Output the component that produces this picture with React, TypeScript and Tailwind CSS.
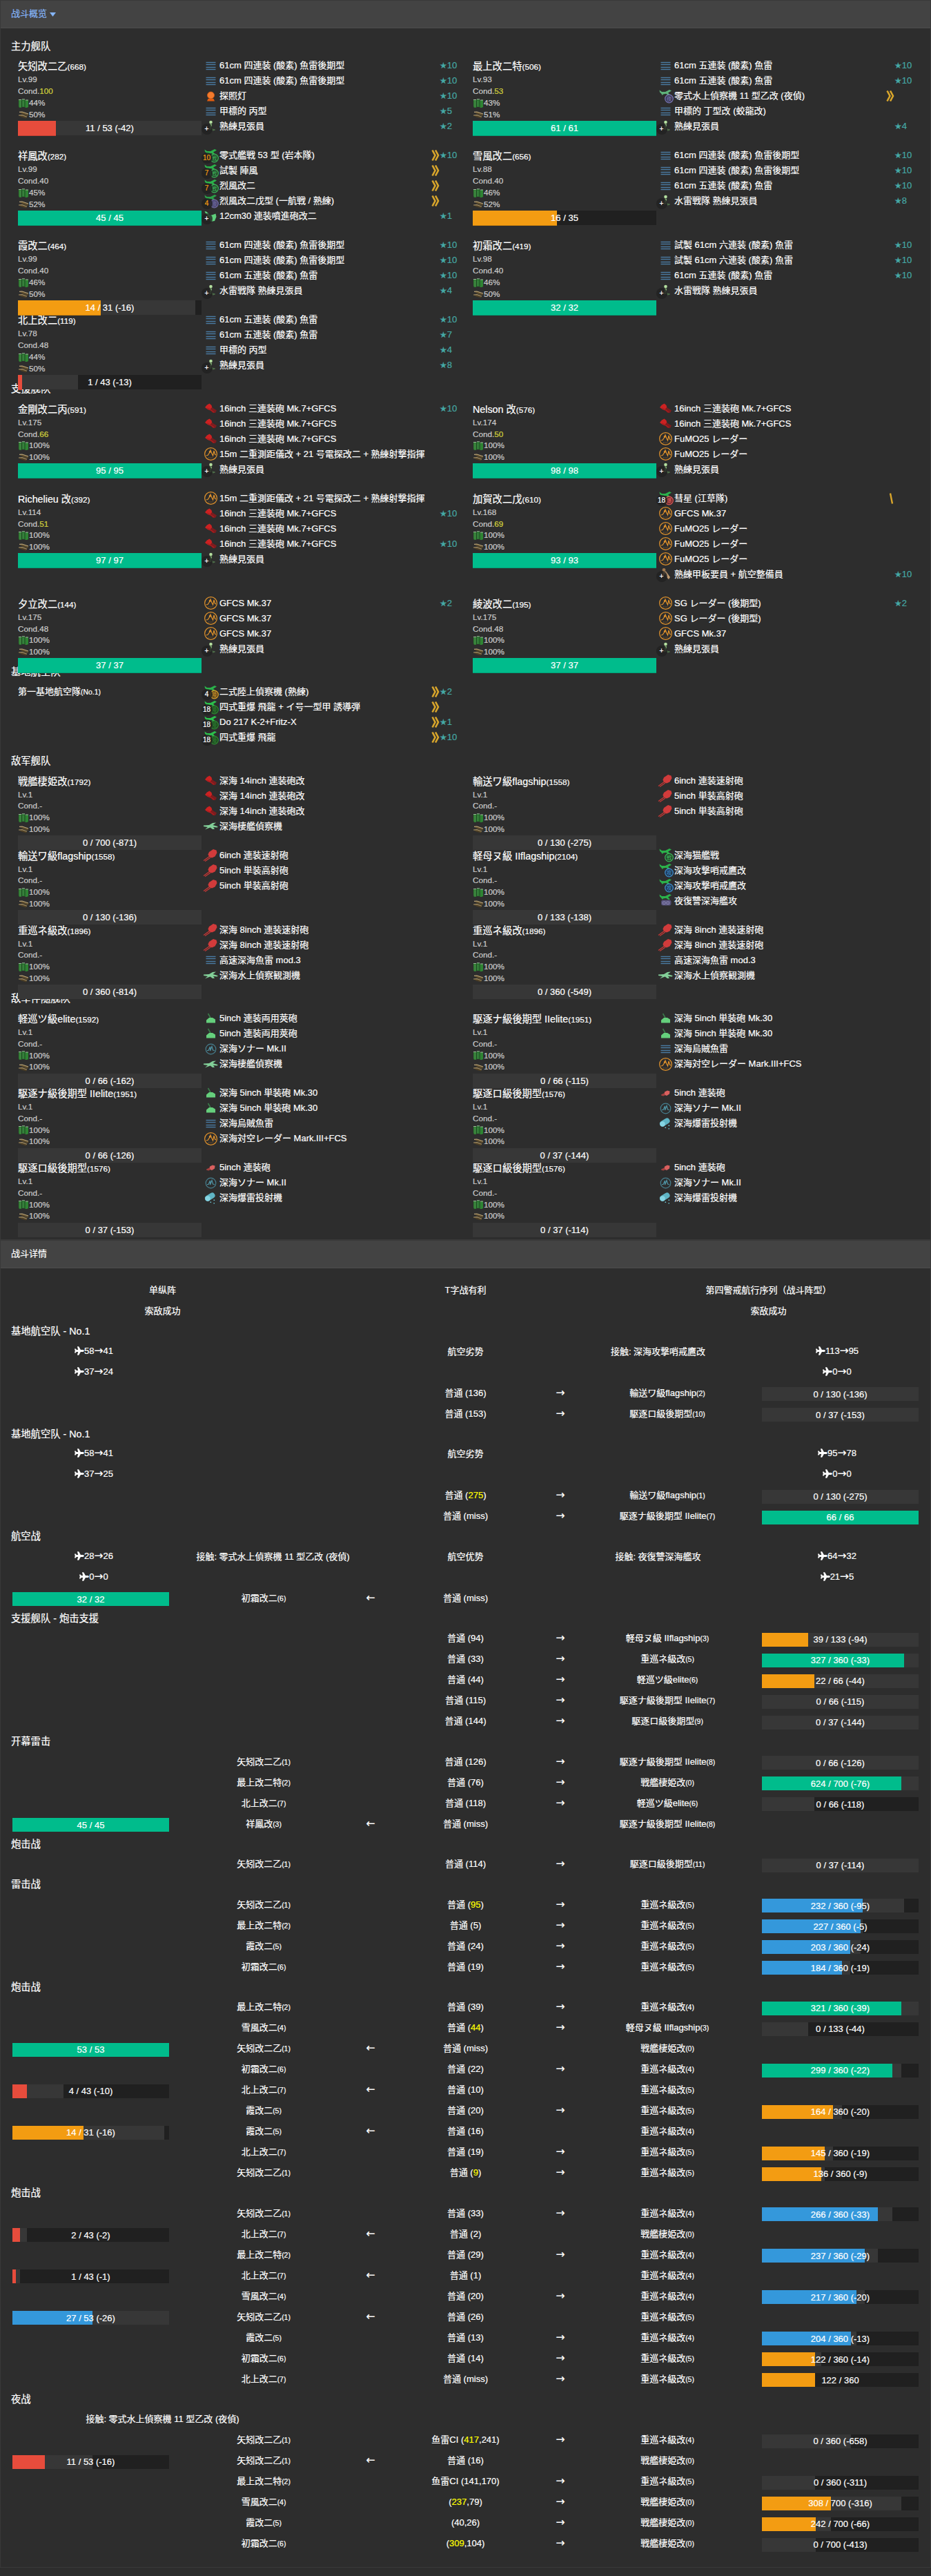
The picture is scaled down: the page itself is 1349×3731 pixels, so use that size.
import { ReactNode } from "react";
import { FaPlane } from "react-icons/fa";

type Equip = [icon: string, name: string, star?: number, prof?: number, badge?: string, badgeHot?: boolean];

interface Ship {
  name: string;
  id: number;
  lv: number;
  cond: string;
  fuel: number;
  ammo: number;
  cur: number;
  max: number;
  lost?: number;
  hurt?: number;
  equips: Equip[];
}

const PLANE = "M1.5 1.5 L5 4 L10 4 L16 1 L19 2.5 L14 5.5 L17 8.5 L14.5 9 L11 6.8 L7 7.5 L5.5 9 L4.5 7 L2 4.5 Z";
const WAVE = "M3.5 13 L6 12.5 L9 8 L10 5 L12 10 L13.5 13 L15 6 L16.5 11 L18 12";

function Plane({ color }: { color: string }) {
  return <path d={PLANE} fill={color} />;
}

function Mark({ stroke, label, fill = "#23412a" }: { stroke: string; label: string; fill?: string }) {
  return (
    <>
      <circle cx="15.5" cy="14" r="5.8" fill={fill} stroke={stroke} strokeWidth="1.2" />
      <text x="15.5" y="16.8" textAnchor="middle" fontSize="7.5" fill={stroke} fontFamily="Noto Sans CJK JP, sans-serif">
        {label}
      </text>
    </>
  );
}

function icon(kind: string): ReactNode {
  switch (kind) {
    case "torp":
      return [5.5, 8.5, 12.5, 15.5].map((y) => (
        <path key={y} d={`M3.5 ${y}H17.5`} stroke="#4a7ba3" strokeWidth="1.4" />
      ));
    case "light":
      return (
        <>
          <path d="M5 17.5 L6.5 14 H14.5 L16 17.5 Z" fill="#e05c10" />
          <circle cx="10.5" cy="9" r="5" fill="#f27b2e" stroke="#d9590f" strokeWidth="0.8" />
        </>
      );
    case "crew":
      return (
        <>
          <circle cx="10.5" cy="4" r="2.3" fill="#b5e0a0" />
          <path d="M9.5 6.5 L12 7 L12 11 L10 15 L8.5 15 Z" fill="#86b877" />
          <path d="M11 11 L15 15 L14 17 L9 12 Z" fill="#4c6b48" />
          <path d="M13.5 14h3v2h-3z" fill="#4c6b48" />
        </>
      );
    case "mech":
      return (
        <>
          <circle cx="8" cy="4.5" r="2.4" fill="#a07850" />
          <path d="M6.5 7 L11 6.5 L17 15 L15 18 L12 15 L10 10 L7 13 Z" fill="#c09a70" />
        </>
      );
    case "aagun":
      return <path d="M1.5 3 L4 3.5 L9 8 L12 8.5 L17.5 6.5 L18.5 11 L16 17 L10 18 L9 13 L3 6 Z" fill="#5fd07c" />;
    case "big":
      return (
        <>
          <path d="M2 9 L5 5.5 L8.5 3.5 L11.5 6 L12.5 10 L10 13.5 L6 12 Z" fill="#cc2222" />
          <path d="M9 12.5 L12 9 L19 13.5 L17 17 L13.5 17 Z" fill="#7d1c1e" />
          <path d="M5 10 L10 12.5 L15 16" stroke="#b01e20" strokeWidth="1.4" />
        </>
      );
    case "med":
      return (
        <>
          <path d="M9 12 L0 18.5 M10 14 L2 19.5" stroke="#c93836" strokeWidth="1.2" />
          <path d="M8 6 L14 2 L18.5 3.5 L19.5 7 L16.5 12.5 L12 14.5 L8 13 L6.5 9.5 Z" fill="#d13b3b" />
        </>
      );
    case "small":
      return (
        <>
          <path d="M9 8.5 L13 6.5 L16.5 7.5 L16 11.5 L12 14 L8.5 12.5 Z" fill="#d9605f" />
          <path d="M4 12.5 L9 10 L9.5 13.5 L7 14.5 L4 13.5 Z" fill="#a3403f" />
        </>
      );
    case "dual":
      return (
        <>
          <path d="M6.5 3 L10 9" stroke="#3b7b4b" strokeWidth="1.6" />
          <path d="M4 16.5 V12.5 L8 9 H13 L17 11.5 V16.5 Z" fill="#65cf7c" />
        </>
      );
    case "radar":
      return (
        <>
          <circle cx="10.5" cy="10.5" r="8.9" fill="none" stroke="#e0922c" strokeWidth="1.2" />
          <path d={WAVE} fill="none" stroke="#e0922c" strokeWidth="1.2" />
          <circle cx="9.2" cy="7.5" r="1.4" fill="#e0922c" />
          <path d="M7 16h7" stroke="#a06a28" strokeDasharray="1 1.2" />
        </>
      );
    case "sonar":
      return (
        <>
          <circle cx="10.5" cy="10.5" r="7.3" fill="none" stroke="#467f8f" strokeWidth="1.2" />
          <path d="M5 12.5 H7 L9.5 7 V13 L12 6.5 L13.5 12 L16 12.5" fill="none" stroke="#4f93a4" strokeWidth="1.2" />
        </>
      );
    case "depth":
      return (
        <>
          <path d="M6 10.5 L12.5 6.5" stroke="#5fb4c4" strokeWidth="8" strokeLinecap="round" />
          <circle cx="6" cy="11" r="3.8" fill="#86d5e3" />
          <path d="M9.5 15.5h1.6v1.6h-1.6zM14.5 12.5h1.6v1.6h-1.6zM14.5 17h1.4v1.4h-1.4z" fill="#6ec3d2" />
        </>
      );
    case "scout":
      return (
        <path
          d="M0 9.5 L8 9 L13 6 L18 5.5 L13.5 9 L20.5 11 L20 12.5 L14 12 L16 15 L13 15 L9.5 12.5 L2 15.5 L6 12 L0 11 Z"
          fill="#82cf98"
        />
      );
    case "fighter":
      return (
        <>
          <Plane color="#2bb24b" />
          <Mark stroke="#3cb75a" label="戦" />
        </>
      );
    case "attack":
      return (
        <>
          <Plane color="#2bb24b" />
          <Mark stroke="#3f8fd0" label="攻" fill="#1f3a55" />
        </>
      );
    case "bomber":
      return (
        <>
          <Plane color="#2bb24b" />
          <Mark stroke="#e05a5a" label="爆" fill="#5a2a2c" />
        </>
      );
    case "nightf":
      return (
        <>
          <Plane color="#2ba048" />
          <Mark stroke="#6f6a9e" label="夜" fill="#4b4772" />
        </>
      );
    case "nighta":
      return (
        <>
          <Plane color="#2bb24b" />
          <rect x="4" y="9.5" width="14.5" height="8" rx="3" fill="#56527a" />
          <path d="M6.5 12h3.5v3.5H6.5zM12 12h3.5v3.5H12z" fill="none" stroke="#8a86b4" />
        </>
      );
    case "nights":
      return (
        <>
          <Plane color="#5eb27a" />
          <Mark stroke="#7a76b5" label="夜" fill="#3a3a52" />
        </>
      );
    case "landscout":
      return (
        <>
          <Plane color="#2bb24b" />
          <Mark stroke="#e0a52c" label="陸" fill="#54421c" />
        </>
      );
    default:
      return (
        <>
          <Plane color="#2cc04c" />
          <Mark stroke="#2f8b33" label="陸" fill="#1f4a22" />
        </>
      );
  }
}

function EquipRow({ item }: { item: Equip }) {
  const [kind, name, star, prof, badge, hot] = item;
  return (
    <div className="flex h-[22px] items-center text-[13px] leading-[22px]">
      <div className="relative h-[21px] w-[21px] shrink-0">
        <svg viewBox="0 0 21 21" className="block h-[21px] w-[21px] overflow-visible">
          {icon(kind)}
        </svg>
        {badge && (
          <span
            className={
              "absolute top-[6px] left-[-3px] flex h-4 w-4 items-center justify-center rounded-full bg-[#202020]/80 text-[10px] leading-none " +
              (hot ? "text-[#f39c12]" : "text-white")
            }
          >
            {badge}
          </span>
        )}
      </div>
      <span className="ml-[2.5px] w-[306px] whitespace-nowrap">{name}</span>
      <span className="flex w-[13px] justify-end">
        {prof === 1 && (
          <svg viewBox="0 0 12 18" className="h-[18px] w-3">
            <path d="M6 1.5 L9 16.5" stroke="#d9a62b" strokeWidth="2.4" />
          </svg>
        )}
        {prof === 7 && (
          <svg viewBox="0 0 12 18" className="h-[18px] w-3">
            <path d="M1.5 1.5 L5.5 9 L1.5 16.5 M6 1.5 L10 9 L6 16.5" fill="none" stroke="#d9a62b" strokeWidth="2.6" />
          </svg>
        )}
      </span>
      {star ? (
        <span className="flex text-[#45a9a5]">
          <span className="font-['DejaVu_Sans'] text-[12px]">★</span>
          {star}
        </span>
      ) : null}
    </div>
  );
}

function tone(r: number) {
  if (r > 0.75) return "bg-[#00bc8c]";
  if (r > 0.5) return "bg-[#3498db]";
  if (r > 0.25) return "bg-[#f39c12]";
  return "bg-[#e74c3c]";
}

/** `lost` is the printed damage, `before` the HP the ship had before the hit. */
function Bar({ cur, max, lost, before, tall }: { cur: number; max: number; lost?: number; before?: number; tall?: boolean }) {
  const start = before ?? Math.min(max, cur + (lost ?? 0));
  return (
    <div className={"relative z-10 w-full shrink-0 bg-[#202020] " + (tall ? "h-[21px]" : "h-[20px]")}>
      <div className="absolute inset-y-0 left-0 bg-[#373737]" style={{ width: `${(start / max) * 100}%` }} />
      <div
        className={"absolute top-0 left-0 " + (tall ? "h-[22px] shadow-[inset_0_-1px_0_rgba(0,0,0,.15)] " : "h-[20px] ") + tone(cur / max)}
        style={{ width: `${(cur / max) * 100}%` }}
      />
      <div className="absolute inset-0 flex items-center justify-center text-[13px] leading-none whitespace-nowrap text-white">
        {`${cur} / ${max}${lost ? ` (-${lost})` : ""}`}
      </div>
    </div>
  );
}

function Fuel() {
  return (
    <svg viewBox="0 0 15 13" className="ml-px h-[13px] w-[15px]">
      <path d="M0 2 H4 V13 H1 L0 11 Z" fill="#2c7a2f" />
      <path d="M4.5 1 H9 V12 H4.5 Z" fill="#23702a" />
      <path d="M9.5 2 H14 V12 L12 13 H9.5 Z" fill="#2e8433" />
      <path d="M0 1.5H4M5 .8H9M10 2H14" stroke="#9bb89b" />
      <path d="M2.2 3V12M6.5 3V11.5" stroke="#5a955c" strokeWidth="0.8" />
    </svg>
  );
}

function Ammo() {
  return (
    <svg viewBox="0 0 15 12" className="ml-px h-3 w-[15px]">
      <path d="M1 2.5 L6 2 L14 5.5 L13 8 L6 5.5 Z" fill="#5a4a2c" />
      <path d="M1 2.3 L5 2 L14 5" stroke="#bda77a" strokeWidth="1.2" fill="none" />
      <path d="M0 7 L5 6.5 L12 9 L11 11.5 L4 9.5 Z" fill="#4d3f26" />
      <path d="M0 7 L5 6.6 L12 9.2" stroke="#a28d62" strokeWidth="1.2" fill="none" />
    </svg>
  );
}

function ShipCard({ ship }: { ship: Ship }) {
  return (
    <div className="flex w-[659px] pb-5 pl-[10px]">
      <div className="flex h-0 w-[266px] flex-col">
        <div className="h-[23px] shrink-0 text-[14.3px] leading-[25px] whitespace-nowrap">
          {ship.name}
          <span className="text-[11.7px]">({ship.id})</span>
        </div>
        <div className="h-[67.5px] shrink-0 text-[11.7px] leading-[16.7px] text-[#cdcdcd]">
          <div>Lv.{ship.lv}</div>
          <div>
            Cond.<span className={Number(ship.cond) >= 50 ? "text-[#d3d33c]" : ""}>{ship.cond}</span>
          </div>
          <div className="flex items-center">
            <Fuel />
            {ship.fuel}%
          </div>
          <div className="flex items-center">
            <Ammo />
            {ship.ammo}%
          </div>
        </div>
        <Bar cur={ship.cur} max={ship.max} lost={ship.lost} before={ship.hurt} tall />
      </div>
      <div className="ml-[2.5px] min-h-[88px]">
        {ship.equips.map((e, i) => (
          <EquipRow key={i} item={e} />
        ))}
      </div>
    </div>
  );
}

function Fleet({ title, ships }: { title: string; ships: Ship[] }) {
  return (
    <section>
      <div className="flex h-[20.43px] text-[14.3px]">
        <span className="-mt-[7.5px] leading-[20px]">{title}</span>
      </div>
      <div className="grid grid-cols-[659px_659px]">
        {ships.map((s, i) => (
          <ShipCard key={i} ship={s} />
        ))}
      </div>
    </section>
  );
}

const T4 = "61cm 四連装 (酸素) 魚雷後期型";
const T5 = "61cm 五連装 (酸素) 魚雷";
const T6 = "試製 61cm 六連装 (酸素) 魚雷";
const G16 = "16inch 三連装砲 Mk.7+GFCS";
const R15 = "15m 二重測距儀改 + 21 号電探改二 + 熟練射撃指揮";
const LOOK = "熟練見張員";
const TLOOK = "水雷戦隊 熟練見張員";

const MAIN: Ship[] = [
  { name: "矢矧改二乙", id: 668, lv: 99, cond: "100", fuel: 44, ammo: 50, cur: 11, max: 53, lost: 42,
    equips: [["torp", T4, 10], ["torp", T4, 10], ["light", "探照灯", 10], ["torp", "甲標的 丙型", 5], ["crew", LOOK, 2, 0, "+"]] },
  { name: "最上改二特", id: 506, lv: 93, cond: "53", fuel: 43, ammo: 51, cur: 61, max: 61,
    equips: [["torp", T5, 10], ["torp", T5, 10], ["nights", "零式水上偵察機 11 型乙改 (夜偵)", 0, 7], ["torp", "甲標的 丁型改 (蛟龍改)"], ["crew", LOOK, 4, 0, "+"]] },
  { name: "祥鳳改", id: 282, lv: 99, cond: "40", fuel: 45, ammo: 52, cur: 45, max: 45,
    equips: [["fighter", "零式艦戦 53 型 (岩本隊)", 10, 7, "10", true], ["fighter", "試製 陣風", 0, 7, "7", true], ["fighter", "烈風改二", 0, 7, "7", true], ["nightf", "烈風改二戊型 (一航戦 / 熟練)", 0, 7, "4", true], ["aagun", "12cm30 連装噴進砲改二", 1, 0, "+"]] },
  { name: "雪風改二", id: 656, lv: 88, cond: "40", fuel: 46, ammo: 52, cur: 16, max: 35,
    equips: [["torp", T4, 10], ["torp", T4, 10], ["torp", T5, 10], ["crew", TLOOK, 8, 0, "+"]] },
  { name: "霞改二", id: 464, lv: 99, cond: "40", fuel: 46, ammo: 50, cur: 14, max: 31, lost: 16,
    equips: [["torp", T4, 10], ["torp", T4, 10], ["torp", T5, 10], ["crew", TLOOK, 4, 0, "+"]] },
  { name: "初霜改二", id: 419, lv: 98, cond: "40", fuel: 46, ammo: 50, cur: 32, max: 32,
    equips: [["torp", T6, 10], ["torp", T6, 10], ["torp", T5, 10], ["crew", TLOOK, 0, 0, "+"]] },
  { name: "北上改二", id: 119, lv: 78, cond: "48", fuel: 44, ammo: 50, cur: 1, max: 43, lost: 13,
    equips: [["torp", T5, 10], ["torp", T5, 7], ["torp", "甲標的 丙型", 4], ["crew", LOOK, 8, 0, "+"]] },
];

const SUPPORT: Ship[] = [
  { name: "金剛改二丙", id: 591, lv: 175, cond: "66", fuel: 100, ammo: 100, cur: 95, max: 95,
    equips: [["big", G16, 10], ["big", G16], ["big", G16], ["radar", R15], ["crew", LOOK, 0, 0, "+"]] },
  { name: "Nelson 改", id: 576, lv: 174, cond: "50", fuel: 100, ammo: 100, cur: 98, max: 98,
    equips: [["big", G16], ["big", G16], ["radar", "FuMO25 レーダー"], ["radar", "FuMO25 レーダー"], ["crew", LOOK, 0, 0, "+"]] },
  { name: "Richelieu 改", id: 392, lv: 114, cond: "51", fuel: 100, ammo: 100, cur: 97, max: 97,
    equips: [["radar", R15], ["big", G16, 10], ["big", G16], ["big", G16, 10], ["crew", LOOK, 0, 0, "+"]] },
  { name: "加賀改二戊", id: 610, lv: 168, cond: "69", fuel: 100, ammo: 100, cur: 93, max: 93,
    equips: [["bomber", "彗星 (江草隊)", 0, 1, "18"], ["radar", "GFCS Mk.37"], ["radar", "FuMO25 レーダー"], ["radar", "FuMO25 レーダー"], ["radar", "FuMO25 レーダー"], ["mech", "熟練甲板要員 + 航空整備員", 10, 0, "+"]] },
  { name: "夕立改二", id: 144, lv: 175, cond: "48", fuel: 100, ammo: 100, cur: 37, max: 37,
    equips: [["radar", "GFCS Mk.37", 2], ["radar", "GFCS Mk.37"], ["radar", "GFCS Mk.37"], ["crew", LOOK, 0, 0, "+"]] },
  { name: "綾波改二", id: 195, lv: 175, cond: "48", fuel: 100, ammo: 100, cur: 37, max: 37,
    equips: [["radar", "SG レーダー (後期型)", 2], ["radar", "SG レーダー (後期型)"], ["radar", "GFCS Mk.37"], ["crew", LOOK, 0, 0, "+"]] },
];

const LBAS: Equip[] = [
  ["landscout", "二式陸上偵察機 (熟練)", 2, 7, "4"],
  ["land", "四式重爆 飛龍 + イ号一型甲 誘導弾", 0, 7, "18"],
  ["land", "Do 217 K-2+Fritz-X", 1, 7, "18"],
  ["land", "四式重爆 飛龍", 10, 7, "18"],
];

function foe(name: string, id: number, max: number, lost: number, equips: Equip[]): Ship {
  return { name, id, lv: 1, cond: "-", fuel: 100, ammo: 100, cur: 0, max, lost, hurt: max, equips };
}

const WA: Equip[] = [["med", "6inch 連装速射砲"], ["med", "5inch 単装高射砲"], ["med", "5inch 単装高射砲"]];
const NE: Equip[] = [["med", "深海 8inch 連装速射砲"], ["med", "深海 8inch 連装速射砲"], ["torp", "高速深海魚雷 mod.3"], ["scout", "深海水上偵察観測機"]];
const NA: Equip[] = [["dual", "深海 5inch 単装砲 Mk.30"], ["dual", "深海 5inch 単装砲 Mk.30"], ["torp", "深海烏賊魚雷"], ["radar", "深海対空レーダー Mark.III+FCS"]];
const RO: Equip[] = [["small", "5inch 連装砲"], ["sonar", "深海ソナー Mk.II"], ["depth", "深海爆雷投射機"]];

const ENEMY: Ship[] = [
  foe("戦艦棲姫改", 1792, 700, 871, [["big", "深海 14inch 連装砲改"], ["big", "深海 14inch 連装砲改"], ["big", "深海 14inch 連装砲改"], ["scout", "深海棲艦偵察機"]]),
  foe("輸送ワ級flagship", 1558, 130, 275, WA),
  foe("輸送ワ級flagship", 1558, 130, 136, WA),
  foe("軽母ヌ級 IIflagship", 2104, 133, 138, [["fighter", "深海猫艦戦"], ["attack", "深海攻撃哨戒鷹改"], ["attack", "深海攻撃哨戒鷹改"], ["nighta", "夜復讐深海艦攻"]]),
  foe("重巡ネ級改", 1896, 360, 814, NE),
  foe("重巡ネ級改", 1896, 360, 549, NE),
];

const ESCORT: Ship[] = [
  foe("軽巡ツ級elite", 1592, 66, 162, [["dual", "5inch 連装両用莢砲"], ["dual", "5inch 連装両用莢砲"], ["sonar", "深海ソナー Mk.II"], ["scout", "深海棲艦偵察機"]]),
  foe("駆逐ナ級後期型 IIelite", 1951, 66, 115, NA),
  foe("駆逐ナ級後期型 IIelite", 1951, 66, 126, NA),
  foe("駆逐ロ級後期型", 1576, 37, 144, RO),
  foe("駆逐ロ級後期型", 1576, 37, 153, RO),
  foe("駆逐ロ級後期型", 1576, 37, 114, RO),
];

type Side = [name: string, pos: number];
type Hp = [cur: number, max: number, lost?: number, before?: number];

function PhaseTitle({ children }: { children: ReactNode }) {
  return <div className="flex h-[28.5px] items-center pt-px text-[14.3px] leading-[27px]">{children}</div>;
}

function Three({ left, mid, right }: { left?: string; mid?: string; right?: string }) {
  return (
    <div className="grid h-[30px] grid-cols-3 items-center text-center">
      <div>{left}</div>
      <div>{mid}</div>
      <div>{right}</div>
    </div>
  );
}

function Arrow({ children }: { children: string }) {
  return <span className="font-['DejaVu_Sans'] text-[15.5px] leading-none">{children}</span>;
}

function Planes({ v }: { v: [number, number] }) {
  return (
    <span className="inline-flex items-center">
      <FaPlane className="h-[13px] w-[14px]" />
      {v[0]}
      <Arrow>→</Arrow>
      {v[1]}
    </span>
  );
}

function Air({ l, lc, mid, rc, r }: { l: [number, number]; lc?: string; mid?: string; rc?: string; r: [number, number] }) {
  return (
    <div className="grid h-[30px] grid-cols-[240px_279px_279px_279px_240px] items-center text-center">
      <div><Planes v={l} /></div>
      <div>{lc}</div>
      <div>{mid}</div>
      <div>{rc}</div>
      <div><Planes v={r} /></div>
    </div>
  );
}

function SideName({ side }: { side?: Side }) {
  return (
    <div>
      {side && (
        <>
          {side[0]}
          <span className="text-[10.4px]">({side[1]})</span>
        </>
      )}
    </div>
  );
}

/** Numbers written with a trailing "!" are critical hits. */
function Hit({ from, dmg, kind = "普通 ", to, hp, back }: { from?: Side; dmg: string; kind?: string; to?: Side; hp: Hp; back?: boolean }) {
  const bar = (
    <div className="px-[2px] pt-[3px]">
      <Bar cur={hp[0]} max={hp[1]} lost={hp[2]} before={hp[3]} />
    </div>
  );
  return (
    <div className="grid h-[30px] grid-cols-[231px_270px_40px_235px_40px_270px_231px] items-center text-center">
      {back ? bar : <div />}
      <SideName side={from} />
      <div className="flex justify-center">{back && <Arrow>←</Arrow>}</div>
      <div>
        {kind}(
        {dmg.split(",").map((d, i) => (
          <span key={i}>
            {i > 0 && ","}
            <span className={d.endsWith("!") ? "text-[#ffff00]" : ""}>{d.replace("!", "")}</span>
          </span>
        ))}
        )
      </div>
      <div className="flex justify-center">{!back && <Arrow>→</Arrow>}</div>
      <SideName side={to} />
      {back ? <div /> : bar}
    </div>
  );
}

const YAHAGI: Side = ["矢矧改二乙", 1];
const MOGAMI: Side = ["最上改二特", 2];
const SHOHO: Side = ["祥鳳改", 3];
const YUKI: Side = ["雪風改二", 4];
const KASUMI: Side = ["霞改二", 5];
const HATSU: Side = ["初霜改二", 6];
const KITA: Side = ["北上改二", 7];
const HIME: Side = ["戦艦棲姫改", 0];
const NU: Side = ["軽母ヌ級 IIflagship", 3];
const NE4: Side = ["重巡ネ級改", 4];
const NE5: Side = ["重巡ネ級改", 5];
const TSU: Side = ["軽巡ツ級elite", 6];
const NA7: Side = ["駆逐ナ級後期型 IIelite", 7];
const NA8: Side = ["駆逐ナ級後期型 IIelite", 8];

export default function App() {
  return (
    <div className="h-[3731px] w-[1349px] overflow-hidden bg-[#2d2d2d] font-['Liberation_Sans','Noto_Sans_CJK_SC',sans-serif] text-[13px] text-white [-webkit-text-stroke:0.2px]">
      <div className="h-[1796px] border border-[#393939]">
        <div className="flex h-10 items-center border-b border-[#4c4c4c] bg-[#434343] pb-[2px] pl-[15px] text-[#85b5f8]">
          战斗概览
          <svg viewBox="0 0 9 6" className="mt-[2px] ml-1 h-[6px] w-[9px]">
            <path d="M0 0H9L4.5 6Z" fill="#85b5f8" />
          </svg>
        </div>
        <div className="pt-[23px] pl-[15px]">
          <Fleet title="主力舰队" ships={MAIN} />
          <Fleet title="支援舰队" ships={SUPPORT} />
          <section>
            <div className="flex h-[20.43px] text-[14.3px]">
              <span className="-mt-[7.5px] leading-[20px]">基地航空队</span>
            </div>
            <div className="flex pb-5 pl-[10px]">
              <div className="w-[268.5px] leading-[21px]">
                第一基地航空隊<span className="text-[10.4px]">(No.1)</span>
              </div>
              <div>
                {LBAS.map((e, i) => (
                  <EquipRow key={i} item={e} />
                ))}
              </div>
            </div>
          </section>
          <Fleet title="敌军舰队" ships={ENEMY} />
          <Fleet title="敌军伴随舰队" ships={ESCORT} />
        </div>
      </div>

      <div className="h-[1923px] border border-[#393939]">
        <div className="flex h-10 items-center border-b border-[#4c4c4c] bg-[#434343] pb-[2px] pl-[15px]">战斗详情</div>
        <div className="w-[1332px] pt-[17px] pl-[15px]">
          <Three left="单纵阵" mid="T字战有利" right="第四警戒航行序列（战斗阵型）" />
          <Three left="索敌成功" right="索敌成功" />

          <PhaseTitle>基地航空队 - No.1</PhaseTitle>
          <Air l={[58, 41]} mid="航空劣势" rc="接触: 深海攻撃哨戒鷹改" r={[113, 95]} />
          <Air l={[37, 24]} r={[0, 0]} />
          <Hit dmg="136" to={["輸送ワ級flagship", 2]} hp={[0, 130, 136]} />
          <Hit dmg="153" to={["駆逐ロ級後期型", 10]} hp={[0, 37, 153]} />

          <PhaseTitle>基地航空队 - No.1</PhaseTitle>
          <Air l={[58, 41]} mid="航空劣势" r={[95, 78]} />
          <Air l={[37, 25]} r={[0, 0]} />
          <Hit dmg="275!" to={["輸送ワ級flagship", 1]} hp={[0, 130, 275]} />
          <Hit dmg="miss" to={NA7} hp={[66, 66]} />

          <PhaseTitle>航空战</PhaseTitle>
          <Air l={[28, 26]} lc="接触: 零式水上偵察機 11 型乙改 (夜偵)" mid="航空优势" rc="接触: 夜復讐深海艦攻" r={[64, 32]} />
          <Air l={[0, 0]} r={[21, 5]} />
          <Hit from={HATSU} dmg="miss" hp={[32, 32]} back />

          <PhaseTitle>支援舰队 - 炮击支援</PhaseTitle>
          <Hit dmg="94" to={NU} hp={[39, 133, 94]} />
          <Hit dmg="33" to={NE5} hp={[327, 360, 33]} />
          <Hit dmg="44" to={TSU} hp={[22, 66, 44]} />
          <Hit dmg="115" to={NA7} hp={[0, 66, 115]} />
          <Hit dmg="144" to={["駆逐ロ級後期型", 9]} hp={[0, 37, 144]} />

          <PhaseTitle>开幕雷击</PhaseTitle>
          <Hit from={YAHAGI} dmg="126" to={NA8} hp={[0, 66, 126]} />
          <Hit from={MOGAMI} dmg="76" to={HIME} hp={[624, 700, 76]} />
          <Hit from={KITA} dmg="118" to={TSU} hp={[0, 66, 118, 22]} />
          <Hit from={SHOHO} dmg="miss" to={NA8} hp={[45, 45]} back />

          <PhaseTitle>炮击战</PhaseTitle>
          <Hit from={YAHAGI} dmg="114" to={["駆逐ロ級後期型", 11]} hp={[0, 37, 114]} />

          <PhaseTitle>雷击战</PhaseTitle>
          <Hit from={YAHAGI} dmg="95!" to={NE5} hp={[232, 360, 95]} />
          <Hit from={MOGAMI} dmg="5" to={NE5} hp={[227, 360, 5]} />
          <Hit from={KASUMI} dmg="24" to={NE5} hp={[203, 360, 24]} />
          <Hit from={HATSU} dmg="19" to={NE5} hp={[184, 360, 19]} />

          <PhaseTitle>炮击战</PhaseTitle>
          <Hit from={MOGAMI} dmg="39" to={NE4} hp={[321, 360, 39]} />
          <Hit from={YUKI} dmg="44!" to={NU} hp={[0, 133, 44, 39]} />
          <Hit from={YAHAGI} dmg="miss" to={HIME} hp={[53, 53]} back />
          <Hit from={HATSU} dmg="22" to={NE4} hp={[299, 360, 22]} />
          <Hit from={KITA} dmg="10" to={NE5} hp={[4, 43, 10]} back />
          <Hit from={KASUMI} dmg="20" to={NE5} hp={[164, 360, 20]} />
          <Hit from={KASUMI} dmg="16" to={NE4} hp={[14, 31, 16]} back />
          <Hit from={KITA} dmg="19" to={NE5} hp={[145, 360, 19]} />
          <Hit from={YAHAGI} dmg="9!" to={NE5} hp={[136, 360, 9]} />

          <PhaseTitle>炮击战</PhaseTitle>
          <Hit from={YAHAGI} dmg="33" to={NE4} hp={[266, 360, 33]} />
          <Hit from={KITA} dmg="2" to={HIME} hp={[2, 43, 2]} back />
          <Hit from={MOGAMI} dmg="29" to={NE4} hp={[237, 360, 29]} />
          <Hit from={KITA} dmg="1" to={NE4} hp={[1, 43, 1]} back />
          <Hit from={YUKI} dmg="20" to={NE4} hp={[217, 360, 20]} />
          <Hit from={YAHAGI} dmg="26" to={NE5} hp={[27, 53, 26]} back />
          <Hit from={KASUMI} dmg="13" to={NE4} hp={[204, 360, 13]} />
          <Hit from={HATSU} dmg="14" to={NE5} hp={[122, 360, 14]} />
          <Hit from={KITA} dmg="miss" to={NE5} hp={[122, 360]} />

          <PhaseTitle>夜战</PhaseTitle>
          <Three left="接触: 零式水上偵察機 11 型乙改 (夜偵)" />
          <Hit from={YAHAGI} kind="鱼雷CI " dmg="417!,241" to={NE4} hp={[0, 360, 658, 204]} />
          <Hit from={YAHAGI} dmg="16" to={HIME} hp={[11, 53, 16]} back />
          <Hit from={MOGAMI} kind="鱼雷CI " dmg="141,170" to={NE5} hp={[0, 360, 311, 122]} />
          <Hit from={YUKI} kind="" dmg="237!,79" to={HIME} hp={[308, 700, 316]} />
          <Hit from={KASUMI} kind="" dmg="40,26" to={HIME} hp={[242, 700, 66]} />
          <Hit from={HATSU} kind="" dmg="309!,104" to={HIME} hp={[0, 700, 413, 242]} />
        </div>
      </div>
    </div>
  );
}
